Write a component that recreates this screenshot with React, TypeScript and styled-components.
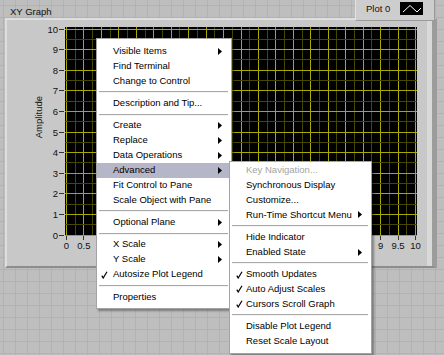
import React from "react";
import styled, { createGlobalStyle } from "styled-components";

const GlobalStyle = createGlobalStyle`
  html, body { margin: 0; padding: 0; }
  body { background: #bdbdbd; font-family: "Liberation Sans", Arial, sans-serif; }
`;

const FONT = `"Liberation Sans", Arial, sans-serif`;

/* ---------- scale constants ---------- */
const PLOT_W = 352;
const PLOT_H = 209;
const X0 = 1;
const XS = 34.9; // px per x unit
const Y0 = 1.5;
const YS = 20.6; // px per y unit
const xPos = (v: number) => X0 + v * XS;
const yPos = (v: number) => Y0 + (10 - v) * YS;

/* ---------- panel ---------- */
const Panel = styled.div`
  position: relative;
  width: 444px;
  height: 355px;
  overflow: hidden;
  background-color: #bebebe;
  background-image: linear-gradient(to right, #b2b2b2 1px, transparent 1px),
    linear-gradient(to bottom, #b2b2b2 1px, transparent 1px);
  background-size: 12px 12px;
  background-position: 3px 5px;
  font-family: ${FONT};
  color: #111;
`;

const GraphBlock = styled.div`
  width: 437px;
  display: flex;
  flex-direction: column;
`;

const HeaderRow = styled.div`
  height: 18px;
  display: flex;
  align-items: flex-start;
`;

const Title = styled.div`
  margin: 6px 0 0 10px;
  font-size: 9.5px;
  line-height: 12px;
  color: #111;
`;

const Legend = styled.div`
  position: relative;
  z-index: 2;
  margin: 0 2px -3px auto;
  width: 80px;
  height: 21px;
  box-sizing: border-box;
  display: flex;
  align-items: flex-start;
  padding: 3px 0 0 10px;
  background: #cdcdcd;
  border-right: 1px solid #9a9a9a;
  border-bottom: 1px solid #9a9a9a;
  border-left: 1px solid #e2e2e2;
`;

const LegendText = styled.span`
  font-size: 9.5px;
  line-height: 12px;
  width: 34px;
`;

const Swatch = styled.svg`
  display: block;
  width: 23px;
  height: 13px;
  margin-top: -1px;
  background: #000;
`;

const Frame = styled.div`
  margin-left: 5px;
  width: 432px;
  height: 250px;
  box-sizing: border-box;
  background: #c8c8c8;
  border-top: 2px solid #dedede;
  border-left: 2px solid #dedede;
  border-right: 5px solid #9c9c9c;
  border-bottom: 2px solid #8c8c8c;
  box-shadow: inset -5px 0 0 #d9d9d9;
  padding: 7px 15px 0 23px;
  display: grid;
  grid-template-columns: 16px 19px ${PLOT_W}px;
  grid-template-rows: ${PLOT_H}px 16px;
`;

const AxisTitle = styled.div`
  grid-column: 1;
  grid-row: 1;
  display: flex;
  align-items: center;
  justify-content: center;
  font-size: 9.5px;
`;

const AxisTitleText = styled.span`
  writing-mode: vertical-rl;
  transform: rotate(180deg);
  margin-top: -28px;
  white-space: nowrap;
`;

const YScale = styled.div`
  grid-column: 2;
  grid-row: 1;
  position: relative;
`;

const YLabel = styled.span`
  position: absolute;
  right: 7px;
  transform: translateY(-50%);
  font-size: 9.5px;
  line-height: 11px;
`;

const YTick = styled.span`
  position: absolute;
  right: 1px;
  width: 5px;
  height: 1px;
  background: #333;
`;

const Plot = styled.svg`
  grid-column: 3;
  grid-row: 1;
  display: block;
  background: #000;
`;

const XScale = styled.div`
  grid-column: 3;
  grid-row: 2;
  position: relative;
`;

const XLabel = styled.span`
  position: absolute;
  top: 4px;
  transform: translateX(-50%);
  font-size: 9.5px;
  line-height: 11px;
`;

const XTick = styled.span`
  position: absolute;
  top: 0;
  width: 1px;
  height: 4px;
  background: #333;
`;

/* ---------- menus ---------- */
const MenuBox = styled.div<{ $left: number; $top: number; $width: number; $pt: number }>`
  position: absolute;
  z-index: 5;
  left: ${(p) => p.$left}px;
  top: ${(p) => p.$top}px;
  width: ${(p) => p.$width}px;
  box-sizing: border-box;
  padding: ${(p) => p.$pt}px 0 4px 0;
  background: #ffffff;
  border: 1px solid #a4a4a4;
  box-shadow: 2px 2px 2px rgba(0, 0, 0, 0.35);
  font-family: ${FONT};
  font-size: 9.5px;
`;

const Row = styled.div<{ $active?: boolean; $disabled?: boolean }>`
  height: 14.85px;
  line-height: 14.85px;
  display: flex;
  align-items: center;
  padding-right: 9px;
  background: ${(p) => (p.$active ? "#b6b6c9" : "transparent")};
  color: ${(p) => (p.$disabled ? "#a3a3a3" : "#000")};
  white-space: nowrap;
`;

const CheckCell = styled.span<{ $pl: number }>`
  width: 16px;
  flex: none;
  box-sizing: border-box;
  padding-left: ${(p) => p.$pl}px;
  display: flex;
  align-items: center;
`;

const Label = styled.span`
  flex: 1;
`;

const Separator = styled.div`
  height: 7.55px;
  display: flex;
  align-items: center;
  padding: 0 3px 0 2px;
`;

const SepLine = styled.div`
  flex: 1;
  height: 1px;
  background: #a8a8a8;
  border-bottom: 1px solid #f4f4f4;
`;

type Item =
  | { label: string; sub?: boolean; checked?: boolean; disabled?: boolean; active?: boolean }
  | "sep";

const mainItems: Item[] = [
  { label: "Visible Items", sub: true },
  { label: "Find Terminal" },
  { label: "Change to Control" },
  "sep",
  { label: "Description and Tip..." },
  "sep",
  { label: "Create", sub: true },
  { label: "Replace", sub: true },
  { label: "Data Operations", sub: true },
  { label: "Advanced", sub: true, active: true },
  { label: "Fit Control to Pane" },
  { label: "Scale Object with Pane" },
  "sep",
  { label: "Optional Plane", sub: true },
  "sep",
  { label: "X Scale", sub: true },
  { label: "Y Scale", sub: true },
  { label: "Autosize Plot Legend", checked: true },
  "sep",
  { label: "Properties" },
];

const subItems: Item[] = [
  { label: "Key Navigation...", disabled: true },
  { label: "Synchronous Display" },
  { label: "Customize..." },
  { label: "Run-Time Shortcut Menu", sub: true },
  "sep",
  { label: "Hide Indicator" },
  { label: "Enabled State", sub: true },
  "sep",
  { label: "Smooth Updates", checked: true },
  { label: "Auto Adjust Scales", checked: true },
  { label: "Cursors Scroll Graph", checked: true },
  "sep",
  { label: "Disable Plot Legend" },
  { label: "Reset Scale Layout" },
];

const CheckIcon = () => (
  <svg width="7" height="8" viewBox="0 0 7 8">
    <path d="M0.8 4.6 L2.2 7 L6 0.8" fill="none" stroke="#000" strokeWidth="1.2" />
  </svg>
);

const ArrowIcon = () => (
  <svg width="4" height="7" viewBox="0 0 4 7">
    <polygon points="0,0 4,3.5 0,7" fill="#000" />
  </svg>
);

const Menu = ({
  items,
  left,
  top,
  width,
  pt,
  checkPad,
}: {
  items: Item[];
  left: number;
  top: number;
  width: number;
  pt: number;
  checkPad: number;
}) => (
  <MenuBox $left={left} $top={top} $width={width} $pt={pt}>
    {items.map((it, i) =>
      it === "sep" ? (
        <Separator key={i}>
          <SepLine />
        </Separator>
      ) : (
        <Row key={i} $active={it.active} $disabled={it.disabled}>
          <CheckCell $pl={checkPad}>{it.checked ? <CheckIcon /> : null}</CheckCell>
          <Label>{it.label}</Label>
          {it.sub ? <ArrowIcon /> : null}
        </Row>
      )
    )}
  </MenuBox>
);

/* ---------- plot grid ---------- */
const PlotGrid = () => {
  const lines: React.ReactNode[] = [];
  for (let k = 0; k <= 40; k++) {
    const v = k * 0.25;
    const x = Math.round(xPos(v)) + 0.5;
    const major = k % 2 === 0;
    lines.push(
      <line
        key={"v" + k}
        x1={x}
        x2={x}
        y1={0}
        y2={PLOT_H}
        stroke={major ? "#a9a900" : "#464600"}
        strokeWidth={1}
      />
    );
  }
  for (let k = 0; k <= 20; k++) {
    const v = k * 0.5;
    const y = Math.round(yPos(v)) + 0.5;
    const major = k % 2 === 0;
    lines.push(
      <line
        key={"h" + k}
        x1={0}
        x2={PLOT_W}
        y1={y}
        y2={y}
        stroke={major ? "#a9a900" : "#464600"}
        strokeWidth={1}
      />
    );
  }
  return (
    <Plot width={PLOT_W} height={PLOT_H} viewBox={`0 0 ${PLOT_W} ${PLOT_H}`}>
      {lines}
    </Plot>
  );
};

const yValues = Array.from({ length: 11 }, (_, i) => 10 - i);
const xValues = Array.from({ length: 21 }, (_, i) => i * 0.5);

export default function App() {
  return (
    <>
      <GlobalStyle />
      <Panel>
        <GraphBlock>
          <HeaderRow>
            <Title>XY Graph</Title>
            <Legend>
              <LegendText>Plot 0</LegendText>
              <Swatch viewBox="0 0 23 13">
                <polyline
                  points="3,10 10,3.5 17,10 21,6"
                  fill="none"
                  stroke="#fff"
                  strokeWidth="1"
                />
              </Swatch>
            </Legend>
          </HeaderRow>
          <Frame>
            <AxisTitle>
              <AxisTitleText>Amplitude</AxisTitleText>
            </AxisTitle>
            <YScale>
              {yValues.map((v) => (
                <React.Fragment key={v}>
                  <YLabel style={{ top: yPos(v) }}>{v}</YLabel>
                  <YTick style={{ top: Math.round(yPos(v)) }} />
                </React.Fragment>
              ))}
            </YScale>
            <PlotGrid />
            <XScale>
              {xValues.map((v) => (
                <React.Fragment key={v}>
                  <XTick style={{ left: Math.round(xPos(v)) }} />
                  <XLabel style={{ left: xPos(v) + 0.5 }}>{String(v)}</XLabel>
                </React.Fragment>
              ))}
            </XScale>
          </Frame>
        </GraphBlock>
        <Menu items={mainItems} left={96} top={38} width={136} pt={5} checkPad={4} />
        <Menu items={subItems} left={229} top={161} width={143} pt={1} checkPad={6} />
      </Panel>
    </>
  );
}
